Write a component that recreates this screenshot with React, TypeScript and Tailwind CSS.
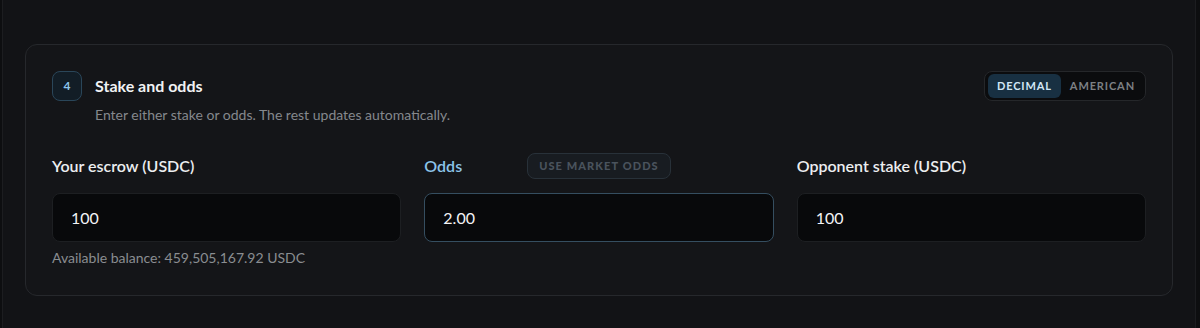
import { useState } from "react";

const App = () => {
  const [mode, setMode] = useState<"decimal" | "american">("decimal");
  const [escrow, setEscrow] = useState("100");
  const [odds, setOdds] = useState("2.00");
  const [opponent, setOpponent] = useState("100");

  return (
    <div className="min-h-[328px] bg-[#0d0e10] font-['Lato',sans-serif]">
      <div className="ml-[2px] mr-[4px] min-h-[328px] border-x border-[#1c1d20] bg-[#121316] pl-[22px] pr-[22px] pt-[44px]">
        <div className="rounded-[12px] border border-[#26282c] bg-[#141518] px-[26px] pt-[26px] pb-[27px]">
          <div className="flex items-start justify-between">
            <div className="flex gap-[13px]">
              <div className="flex h-[30px] w-[30px] items-center justify-center rounded-[8px] border border-[#2a4659] bg-[#121d26] text-[12px] font-bold text-[#8cc4ea]">
                4
              </div>
              <div className="pt-[5px]">
                <h2 className="text-[16px] font-bold leading-[20px] text-[#f1f2f4]">
                  Stake and odds
                </h2>
                <p className="mt-[10px] text-[14px] leading-[18px] text-[#85888d]">
                  Enter either stake or odds. The rest updates automatically.
                </p>
              </div>
            </div>
            <div className="flex h-[30px] items-center gap-[2px] rounded-[8px] border border-[#25272a] bg-[#0b0c0e] p-[3px]">
              <button
                onClick={() => setMode("decimal")}
                className={
                  mode === "decimal"
                    ? "h-[24px] rounded-[6px] bg-[#183042] px-[9px] text-[11px] font-bold tracking-[0.08em] text-[#d2e7f6]"
                    : "h-[24px] rounded-[6px] px-[9px] text-[11px] font-bold tracking-[0.08em] text-[#7d8084]"
                }
              >
                DECIMAL
              </button>
              <button
                onClick={() => setMode("american")}
                className={
                  mode === "american"
                    ? "h-[24px] rounded-[6px] bg-[#183042] px-[7px] text-[11px] font-bold tracking-[0.08em] text-[#d2e7f6]"
                    : "h-[24px] rounded-[6px] px-[7px] text-[11px] font-bold tracking-[0.08em] text-[#7d8084]"
                }
              >
                AMERICAN
              </button>
            </div>
          </div>

          <div className="mt-[28px] grid grid-cols-3 gap-[23px]">
            <div>
              <div className="flex h-[28px] items-center">
                <label className="text-[16px] font-semibold text-[#eceef0]">Your escrow (USDC)</label>
              </div>
              <input
                value={escrow}
                onChange={(e) => setEscrow(e.target.value)}
                className="mt-[13px] h-[49px] w-full rounded-[8px] border border-[#1d1f22] bg-[#08090b] px-[18px] text-[16px] text-[#f3f4f6] outline-none"
              />
              <p className="mt-[5px] text-[14px] text-[#8a8d91]">
                Available balance: 459,505,167.92 USDC
              </p>
            </div>
            <div>
              <div className="flex h-[28px] items-center gap-[65px]">
                <label className="text-[16px] font-semibold text-[#8cc4ea]">Odds</label>
                <button className="h-[26px] rounded-[8px] border border-[#283139] bg-[#181c21] px-[11px] text-[11px] font-black tracking-[0.1em] text-[#4a535d]">
                  USE MARKET ODDS
                </button>
              </div>
              <input
                value={odds}
                onChange={(e) => setOdds(e.target.value)}
                className="mt-[13px] h-[49px] w-full rounded-[8px] border border-[#354e60] bg-[#08090b] px-[18px] text-[16px] text-[#f3f4f6] outline-none"
              />
            </div>
            <div>
              <div className="flex h-[28px] items-center">
                <label className="text-[16px] font-semibold text-[#eceef0]">Opponent stake (USDC)</label>
              </div>
              <input
                value={opponent}
                onChange={(e) => setOpponent(e.target.value)}
                className="mt-[13px] h-[49px] w-full rounded-[8px] border border-[#1d1f22] bg-[#08090b] px-[18px] text-[16px] text-[#f3f4f6] outline-none"
              />
            </div>
          </div>
        </div>
      </div>
    </div>
  );
};

export default App;
